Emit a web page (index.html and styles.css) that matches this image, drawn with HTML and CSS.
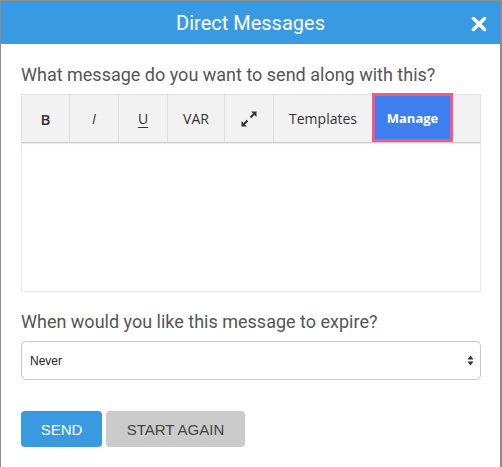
FILE: index.html
```html
<!DOCTYPE html>
<html lang="en">
<head>
<meta charset="utf-8">
<title>Direct Messages</title>
<link rel="stylesheet" href="styles.css">
</head>
<body>
<div class="window">
  <header class="header">
    <h1 class="title">Direct Messages</h1>
    <button class="close" aria-label="Close">
      <svg width="16" height="16" viewBox="0 0 16 16"><path d="M2.5 2.5 L13.5 13.5 M13.5 2.5 L2.5 13.5" stroke="#fff" stroke-width="3.4" stroke-linecap="round"/></svg>
    </button>
  </header>
  <main class="content">
    <p class="label">What message do you want to send along with this?</p>
    <div class="editor">
      <div class="toolbar">
        <button class="tool tool-b">B</button>
        <button class="tool tool-i">I</button>
        <button class="tool tool-u">U</button>
        <button class="tool tool-var">VAR</button>
        <button class="tool tool-expand" aria-label="Expand">
          <svg width="16" height="16" viewBox="0 0 16 16">
            <path d="M15.5 0.5 L15.5 6 L10 0.5 Z" fill="#333"/>
            <path d="M13 3 L9.5 6.5" stroke="#333" stroke-width="2"/>
            <path d="M0.5 15.5 L0.5 10 L6 15.5 Z" fill="#333"/>
            <path d="M3 13 L6.5 9.5" stroke="#333" stroke-width="2"/>
          </svg>
        </button>
        <button class="tool tool-templates">Templates</button>
        <button class="tool tool-manage">Manage</button>
      </div>
      <div class="editor-body"></div>
    </div>
    <p class="label label-expire">When would you like this message to expire?</p>
    <div class="select">
      <span class="select-value">Never</span>
      <svg class="select-arrows" width="7" height="11" viewBox="0 0 7 11">
        <path d="M3.5 0.5 L6.5 4.5 L0.5 4.5 Z" fill="#333"/>
        <path d="M3.5 10.5 L6.5 6.5 L0.5 6.5 Z" fill="#333"/>
      </svg>
    </div>
    <div class="actions">
      <button class="btn btn-send">SEND</button>
      <button class="btn btn-reset">START AGAIN</button>
    </div>
  </main>
</div>
</body>
</html>
```

FILE: styles.css
```css
* { box-sizing: border-box; }

body {
  margin: 0;
  background: #fff;
  font-family: Roboto, "Liberation Sans", sans-serif;
}

.window {
  width: 502px;
  height: 467px;
  border-top: 1px solid #8c8c8c;
  border-left: 1px solid #8c8c8c;
  border-right: 2px solid #8c8c8c;
  background: #fff;
}

.header {
  height: 43px;
  background: #3a9ae1;
  display: flex;
  align-items: center;
  justify-content: center;
  position: relative;
}

.title {
  margin: 0;
  font-family: Roboto, sans-serif;
  font-weight: 400;
  font-size: 20px;
  color: #fff;
}

.close {
  position: absolute;
  right: 12px;
  top: 14px;
  width: 18px;
  height: 18px;
  padding: 1px;
  border: 0;
  background: transparent;
  display: flex;
}

.content {
  padding: 20px 19px 0 20px;
}

.label {
  margin: 0;
  font-size: 18px;
  line-height: 22px;
  color: #555;
}

.editor {
  margin-top: 8px;
}

.toolbar {
  height: 49px;
  display: flex;
  background: #f2f2f2;
  border: 1px solid #e2e2e2;
  border-bottom: 1px solid #cfcfcf;
  box-shadow: 0 1px 1px rgba(0, 0, 0, 0.08);
}

.tool {
  height: 47px;
  border: 0;
  border-right: 1px solid #e0e0e0;
  background: transparent;
  padding: 0;
  font-family: "Open Sans", sans-serif;
  font-size: 14px;
  color: #333;
  display: flex;
  align-items: center;
  justify-content: center;
}

.tool-b { width: 48px; font-weight: 600; font-size: 15px; }
.tool-i { width: 49px; font-style: italic; }
.tool-u { width: 49px; text-decoration: underline; text-underline-offset: 3px; }
.tool-var { width: 57px; }
.tool-expand { width: 49px; }
.tool-templates { width: 98px; border-right: 0; }

.tool-manage {
  width: 81px;
  height: 49px;
  margin-top: -2px;
  border: 3px solid #f2588b;
  background: #3e7ff0;
  color: #fff;
  font-weight: 700;
  font-size: 13px;
}

.editor-body {
  height: 149px;
  border: 1px solid #e8e8e8;
  border-top: 0;
}

.label-expire {
  margin-top: 19px;
}

.select {
  margin-top: 8px;
  height: 39px;
  border: 1px solid #c9c9c9;
  border-radius: 5px;
  display: flex;
  align-items: center;
  justify-content: space-between;
  padding: 0 6px 0 8px;
  font-family: "Liberation Sans", Arial, sans-serif;
  font-size: 12px;
  color: #222;
}

.actions {
  margin-top: 31px;
  display: flex;
  gap: 4px;
}

.btn {
  height: 36px;
  border: 0;
  border-radius: 4px;
  font-family: "Liberation Sans", Arial, sans-serif;
  font-size: 15px;
  padding: 0;
}

.btn-send {
  width: 81px;
  background: #3a9ae1;
  color: #fff;
}

.btn-reset {
  width: 139px;
  background: #cbcbcb;
  color: #444;
}
```
